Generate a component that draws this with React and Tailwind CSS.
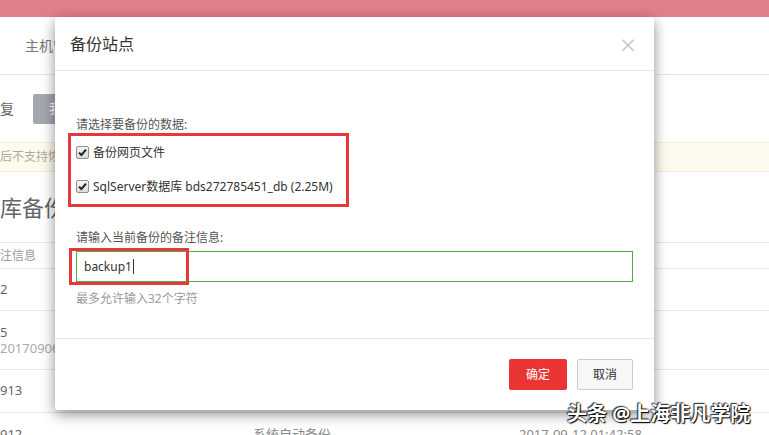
import React from 'react';

const font = { fontFamily: '"Noto Sans", "Noto Sans CJK SC", sans-serif' };

function Tick() {
  return (
    <span className="flex h-[13px] w-[13px] shrink-0 items-center justify-center rounded-[2px] border border-[#8f8f8f] bg-gradient-to-b from-[#f4f4f4] to-[#dcdcdc]">
      <svg width="9" height="9" viewBox="0 0 9 9">
        <path d="M1 4.6 L3.4 7 L8 1.6" fill="none" stroke="#222" strokeWidth="2" />
      </svg>
    </span>
  );
}

function PageBehind() {
  return (
    <div className="flex h-[435px] flex-col overflow-hidden bg-white text-[#666]">
      <div className="h-[17px] shrink-0 bg-[#e07f8c]" />
      <div className="flex h-[58px] shrink-0 items-center border-b border-[#e5e5e5] pl-[25px] text-[14px] text-[#777]">
        主机管理
      </div>
      <div className="flex h-[67px] shrink-0 items-center">
        <span className="w-[33px] text-[14px] text-[#666]">复</span>
        <span className="flex h-[30px] w-[70px] items-center rounded-[2px] bg-[#a4a7ae] pl-[16px] text-[13px] text-white">我的备份</span>
      </div>
      <div className="flex h-[30px] shrink-0 items-center border-y border-[#f6efd6] bg-[#fdfbef] text-[12px] text-[#b3a993]">
        后不支持恢复到其他站点
      </div>
      <div className="flex h-[70px] shrink-0 items-center text-[22px] text-[#666]">库备份列表</div>
      <div className="flex h-[26px] shrink-0 items-center border-t border-[#e8e8e8] text-[12px] text-[#999]">注信息</div>
      <div className="flex h-[42px] shrink-0 items-center border-t border-[#e8e8e8] text-[13px]">2</div>
      <div className="flex h-[59px] shrink-0 flex-col justify-center border-t border-[#e8e8e8] text-[13px] leading-[16px]">
        <span>5</span>
        <span className="text-[#aaa]">20170906</span>
      </div>
      <div className="flex h-[43px] shrink-0 items-center border-t border-[#e8e8e8] text-[13px]">913</div>
      <div className="flex h-[40px] shrink-0 items-center border-t border-[#e8e8e8] pt-[4px] text-[13px]">
        <span className="w-[147px]">912</span>
        <span className="w-[106px] text-[#999]">-</span>
        <span className="w-[266px] text-[#888]">系统自动备份</span>
        <span className="text-[#888]">2017-09-12 01:42:58</span>
      </div>
    </div>
  );
}

function BackupDialog() {
  return (
    <div className="absolute left-[55px] top-[17px] flex w-[599px] flex-col rounded-[3px] bg-white shadow-[0_4px_14px_rgba(0,0,0,0.45)]">
      <div className="flex h-[54px] items-center justify-between border-b border-[#e5e5e5] pl-[15px] pr-[18px]">
        <span className="text-[16px] text-[#333]">备份站点</span>
        <span className="text-[28px] font-light leading-none text-[#c4c4c4]">×</span>
      </div>
      <div className="relative flex h-[267px] flex-col px-[21px] pt-[45px] text-[12px] leading-[17px] text-[#333]">
        <div className="text-[#555]">请选择要备份的数据:</div>
        <label className="mt-[11px] flex items-center gap-[4px]">
          <Tick />
          <span>备份网页文件</span>
        </label>
        <label className="mt-[17px] flex items-center gap-[4px]">
          <Tick />
          <span>SqlServer数据库 bds272785451_db (2.25M)</span>
        </label>
        <div className="mt-[34px] text-[#555]">请输入当前备份的备注信息:</div>
        <div className="mt-[5px] flex h-[31px] items-center border border-[#4fae3f] pl-[7px] text-[12px] text-[#333]">
          backup1<span className="ml-[1px] h-[15px] w-px bg-[#333]" />
        </div>
        <div className="mt-[8px] text-[#999]">最多允许输入32个字符</div>
        <div className="absolute left-[13px] top-[62px] h-[74px] w-[281px] border-[3px] border-[#e5383b]" />
        <div className="absolute left-[14px] top-[177px] h-[37px] w-[120px] border-[3px] border-[#e5383b]" />
      </div>
      <div className="flex justify-end gap-[10px] border-t border-[#e5e5e5] px-[21px] pb-[20px] pt-[20px] text-[12px]">
        <button className="h-[31px] w-[58px] rounded-[2px] bg-[#eb3434] text-white">确定</button>
        <button className="h-[31px] w-[56px] rounded-[2px] border border-[#ccc] bg-[#f7f7f7] text-[#333]">取消</button>
      </div>
    </div>
  );
}

export default function App() {
  return (
    <div className="relative h-[435px] w-[769px] overflow-hidden" style={font}>
      <PageBehind />
      <BackupDialog />
      <div className="absolute left-[567px] top-[399px] text-[20px] font-bold text-white [text-shadow:0_0_2px_#000,1px_1px_1px_#000,-1px_-1px_1px_#444]">
        头条 @上海非凡学院
      </div>
    </div>
  );
}
